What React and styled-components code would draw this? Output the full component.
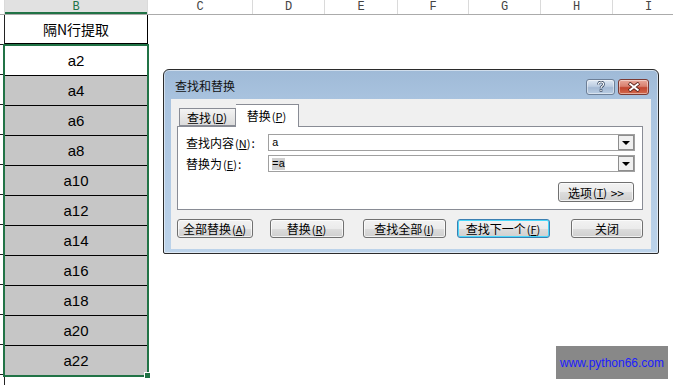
import React from 'react';
import styled, { createGlobalStyle } from 'styled-components';

const GlobalStyle = createGlobalStyle`
    html, body { margin: 0; padding: 0; background: #fff; }
    body { font-family: "Liberation Sans", "Noto Sans CJK SC", sans-serif; }
`;

const Page = styled.div`
    position: relative;
    width: 673px;
    height: 385px;
    overflow: hidden;
    background: #fff;
`;

const HeaderRow = styled.div`
    display: flex;
    height: 14px;
    border-bottom: 1px solid #ababab;
`;

const HeaderCell = styled.div`
    flex: none;
    width: ${(p) => p.$w}px;
    box-sizing: border-box;
    border-right: 1px solid #dadada;
    font-family: "Liberation Mono", monospace;
    font-size: 12px;
    line-height: 14px;
    text-align: center;
    color: ${(p) => (p.$sel ? '#217346' : '#444')};
    background: ${(p) => (p.$sel ? '#e1e1e1' : '#fff')};
    box-shadow: ${(p) => (p.$sel ? 'inset 0 -2px 0 #217346' : 'none')};
`;

const Body = styled.div`
    display: flex;
`;

const RowHeads = styled.div`
    width: 5px;
    flex: none;
    border-right: 1px solid #222;
    box-sizing: border-box;
`;

const RowHead = styled.div`
    height: 29px;
    border-bottom: 1px solid #222;
`;

const ColB = styled.div`
    width: 143px;
    flex: none;
`;

const TitleCell = styled.div`
    height: 28px;
    border-right: 1px solid #000;
    border-bottom: 1px solid #000;
    display: flex;
    align-items: center;
    justify-content: center;
    font-family: "Noto Sans CJK SC", sans-serif;
    font-size: 14px;
    color: #000;
`;

const Selection = styled.div`
    margin-left: -2px;
    width: 146px;
    box-sizing: border-box;
    border: 2px solid #217346;
    position: relative;
`;

const Cell = styled.div`
    height: 29px;
    border-bottom: ${(p) => (p.$last ? 'none' : '1px solid #000')};
    background: ${(p) => (p.$active ? '#fff' : '#c6c6c6')};
    display: flex;
    align-items: center;
    justify-content: center;
    font-size: 15px;
    color: #000;
`;

const Handle = styled.div`
    position: absolute;
    right: -4px;
    bottom: -4px;
    width: 5px;
    height: 5px;
    background: #217346;
    border: 1px solid #fff;
`;

const Dialog = styled.div`
    position: absolute;
    left: 163px;
    top: 69px;
    width: 496px;
    height: 185px;
    box-sizing: border-box;
    border: 1px solid #2b2b2b;
    border-radius: 6px 6px 2px 2px;
    background: linear-gradient(#9fbad7 0, #a9c3df 30px, #bcd3ea 100%);
    display: flex;
    flex-direction: column;
    box-shadow: inset 0 0 0 1px rgba(255, 255, 255, 0.5);
    font-family: "Noto Sans CJK SC", sans-serif;
`;

const TitleBar = styled.div`
    height: 29px;
    display: flex;
    align-items: center;
    padding: 0 9px 0 11px;
    font-size: 12px;
    color: #111;
`;

const Title = styled.div`
    flex: 1;
    padding-top: 2px;
`;

const CaptionButton = styled.div`
    width: ${(p) => p.$w}px;
    height: 16px;
    margin-left: 3px;
    margin-top: 4px;
    box-sizing: border-box;
    border: 1px solid ${(p) => (p.$close ? '#7b3a33' : '#6d7f97')};
    border-radius: 3px;
    background: ${(p) =>
        p.$close
            ? 'linear-gradient(#e9a99b 0, #d9806f 45%, #c2452f 55%, #d26a4e 100%)'
            : 'linear-gradient(#dfe8f3 0, #bccde2 45%, #a4b9d4 55%, #b9cde3 100%)'};
    display: flex;
    align-items: center;
    justify-content: center;
    box-shadow: inset 0 0 0 1px rgba(255, 255, 255, 0.45);
`;

const Client = styled.div`
    flex: 1;
    margin: 0 7px 4px 7px;
    background: #f0f0f0;
    padding: 5px 8px 0 6px;
    display: flex;
    flex-direction: column;
`;

const Tabs = styled.div`
    display: flex;
    align-items: flex-end;
    height: 22px;
    padding-left: 2px;
    position: relative;
    z-index: 1;
`;

const Tab = styled.div`
    box-sizing: border-box;
    width: ${(p) => p.$w}px;
    height: ${(p) => (p.$active ? 23 : 18)}px;
    margin-bottom: ${(p) => (p.$active ? -1 : 0)}px;
    border: 1px solid #898c95;
    border-bottom: ${(p) => (p.$active ? 'none' : '1px solid #898c95')};
    border-left: ${(p) => (p.$active ? 'none' : '1px solid #898c95')};
    background: ${(p) => (p.$active ? '#fff' : 'linear-gradient(#f4f4f4, #dcdcdc)')};
    font-size: 12px;
    line-height: 1;
    display: flex;
    align-items: center;
    justify-content: center;
    padding-top: ${(p) => (p.$active ? 0 : 1)}px;
    color: #000;
`;

const Panel = styled.div`
    height: 84px;
    box-sizing: border-box;
    background: #fff;
    border: 1px solid #898c95;
    padding: 7px 7px 0 8px;
    display: flex;
    flex-direction: column;
`;

const FieldRow = styled.div`
    display: flex;
    align-items: center;
    height: 17px;
    margin-bottom: 4px;
`;

const Label = styled.div`
    width: 82px;
    font-size: 12px;
    color: #000;
`;

const Input = styled.div`
    flex: 1;
    height: 17px;
    box-sizing: border-box;
    border: 1px solid #a0a0a0;
    display: flex;
    align-items: center;
    padding-left: 3px;
    font-family: "Liberation Mono", monospace;
    font-size: 11px;
    color: #000;
`;

const InputText = styled.span`
    flex: 1;
    line-height: 12px;
    & > mark {
        background: #cfcfcf;
        color: #000;
    }
`;

const Drop = styled.div`
    width: 16px;
    height: 15px;
    box-sizing: border-box;
    border: 1px solid #8d8d8d;
    background: #f0f0f0;
    display: flex;
    align-items: center;
    justify-content: center;
    &::after {
        content: '';
        border-left: 4px solid transparent;
        border-right: 4px solid transparent;
        border-top: 4px solid #000;
        margin-top: 1px;
    }
`;

const OptionsRow = styled.div`
    display: flex;
    justify-content: flex-end;
    margin-top: 6px;
    padding-right: 1px;
`;

const Button = styled.div`
    box-sizing: border-box;
    width: ${(p) => p.$w}px;
    height: ${(p) => p.$h || 19}px;
    margin-left: ${(p) => p.$ml || 0}px;
    border: 1px solid ${(p) => (p.$focus ? '#3c7fb1' : '#707070')};
    border-radius: 3px;
    background: linear-gradient(#f2f2f2 0, #ebebeb 50%, #dddddd 51%, #cfcfcf 100%);
    box-shadow: ${(p) =>
        p.$focus ? 'inset 0 0 0 1px #48d8fb' : 'inset 0 0 0 1px rgba(255,255,255,0.7)'};
    display: flex;
    align-items: center;
    justify-content: center;
    font-size: 12px;
    color: #000;
    flex: none;
`;

const Key = styled.span`
    font-size: 11px;
    margin: 0 1px;
    & > u {
        text-underline-offset: 1px;
    }
`;

const ButtonRow = styled.div`
    display: flex;
    margin-top: 9px;
`;

const Watermark = styled.div`
    position: absolute;
    left: 556px;
    top: 346px;
    width: 112px;
    height: 33px;
    background: #888;
    color: #1c1cff;
    font-size: 12px;
    display: flex;
    align-items: center;
    justify-content: center;
`;

const cols = [
    { w: 5, l: '' },
    { w: 143, l: 'B', sel: true },
    { w: 105, l: 'C' },
    { w: 72, l: 'D' },
    { w: 73, l: 'E' },
    { w: 71, l: 'F' },
    { w: 72, l: 'G' },
    { w: 72, l: 'H' },
    { w: 72, l: 'I' },
];

const values = ['a2', 'a4', 'a6', 'a8', 'a10', 'a12', 'a14', 'a16', 'a18', 'a20', 'a22'];

const Mn = ({ k }) => (
    <Key>
        (<u>{k}</u>)
    </Key>
);

const App = () => {
    return (
        <Page>
            <GlobalStyle />
            <HeaderRow>
                {cols.map((c, i) => (
                    <HeaderCell key={i} $w={c.w} $sel={c.sel}>
                        {c.l}
                    </HeaderCell>
                ))}
            </HeaderRow>
            <Body>
                <RowHeads>
                    {Array.from({ length: 13 }).map((_, i) => (
                        <RowHead key={i} />
                    ))}
                </RowHeads>
                <ColB>
                    <TitleCell>隔N行提取</TitleCell>
                    <Selection>
                        {values.map((v, i) => (
                            <Cell key={v} $active={i === 0} $last={i === values.length - 1}>
                                {v}
                            </Cell>
                        ))}
                        <Handle />
                    </Selection>
                </ColB>
            </Body>

            <Dialog>
                <TitleBar>
                    <Title>查找和替换</Title>
                    <CaptionButton $w={29}>
                        <svg width="10" height="11" viewBox="0 0 10 11">
                            <path
                                d="M2.5 3.5 Q2.5 1 5 1 Q7.5 1 7.5 3.3 Q7.5 4.6 5.8 5.5 Q5 6 5 7.3"
                                fill="none"
                                stroke="#2c3e57"
                                strokeWidth="2.6"
                            />
                            <path
                                d="M2.5 3.5 Q2.5 1 5 1 Q7.5 1 7.5 3.3 Q7.5 4.6 5.8 5.5 Q5 6 5 7.3"
                                fill="none"
                                stroke="#fff"
                                strokeWidth="1.2"
                            />
                            <rect x="3.7" y="8.2" width="2.6" height="2.6" fill="#2c3e57" />
                            <rect x="4.3" y="8.8" width="1.4" height="1.4" fill="#fff" />
                        </svg>
                    </CaptionButton>
                    <CaptionButton $w={31} $close>
                        <svg width="14" height="10" viewBox="0 0 14 10">
                            <path d="M2 1 L12 9 M12 1 L2 9" stroke="#5a231b" strokeWidth="3.6" />
                            <path d="M2.5 1.5 L11.5 8.5 M11.5 1.5 L2.5 8.5" stroke="#fff" strokeWidth="2" />
                        </svg>
                    </CaptionButton>
                </TitleBar>
                <Client>
                    <Tabs>
                        <Tab $w={57}>
                            查找<Mn k="D" />
                        </Tab>
                        <Tab $w={63} $active>
                            替换<Mn k="P" />
                        </Tab>
                    </Tabs>
                    <Panel>
                        <FieldRow>
                            <Label>
                                查找内容<Mn k="N" />:
                            </Label>
                            <Input>
                                <InputText>a</InputText>
                                <Drop />
                            </Input>
                        </FieldRow>
                        <FieldRow>
                            <Label>
                                替换为<Mn k="E" />:
                            </Label>
                            <Input>
                                <InputText>
                                    <mark>=a</mark>
                                </InputText>
                                <Drop />
                            </Input>
                        </FieldRow>
                        <OptionsRow>
                            <Button $w={76} $h={20}>
                                选项<Mn k="T" />&nbsp;&gt;&gt;
                            </Button>
                        </OptionsRow>
                    </Panel>
                    <ButtonRow>
                        <Button $w={76}>
                            全部替换<Mn k="A" />
                        </Button>
                        <Button $w={74} $ml={17}>
                            替换<Mn k="R" />
                        </Button>
                        <Button $w={83} $ml={19}>
                            查找全部<Mn k="I" />
                        </Button>
                        <Button $w={93} $ml={11} $focus>
                            查找下一个<Mn k="F" />
                        </Button>
                        <Button $w={72} $ml={21}>
                            关闭
                        </Button>
                    </ButtonRow>
                </Client>
            </Dialog>

            <Watermark>www.python66.com</Watermark>
        </Page>
    );
};

export default App;
